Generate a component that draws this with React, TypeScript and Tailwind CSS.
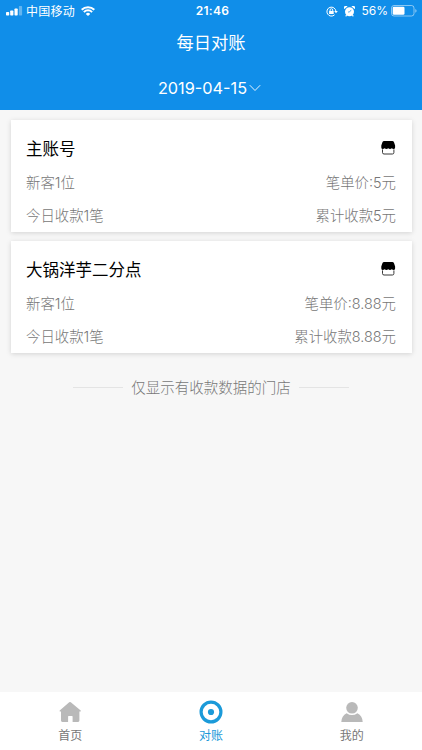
import React from 'react'

interface Store {
  name: string
  newCustomers: string
  unitPrice: string
  count: string
  total: string
}

const stores: Store[] = [
  { name: '主账号', newCustomers: '新客1位', unitPrice: '笔单价:5元', count: '今日收款1笔', total: '累计收款5元' },
  { name: '大锅洋芋二分点', newCustomers: '新客1位', unitPrice: '笔单价:8.88元', count: '今日收款1笔', total: '累计收款8.88元' },
]

function SignalIcon() {
  return (
    <svg width="17" height="10" viewBox="0 0 17 10" fill="currentColor">
      <rect x="0" y="6" width="3.2" height="3.5" rx="0.7" />
      <rect x="4.2" y="4.5" width="3.2" height="5" rx="0.7" />
      <rect x="8.5" y="2.5" width="3.2" height="7" rx="0.7" />
      <rect x="12.9" y="0" width="3.2" height="9.5" rx="0.7" opacity="0.35" />
    </svg>
  )
}

function WifiIcon() {
  return (
    <svg width="14" height="10" viewBox="0 0 14 10" fill="none" stroke="currentColor" strokeWidth="2">
      <path d="M0.7 3.7 A9 9 0 0 1 13.3 3.7" />
      <path d="M2.9 6.1 A5.7 5.7 0 0 1 11.1 6.1" />
      <path d="M4.8 7.9 A3 3 0 0 1 9.2 7.9 L7 10 Z" fill="currentColor" stroke="none" />
    </svg>
  )
}

function LockIcon() {
  return (
    <svg width="12" height="11" viewBox="0 0 12 11" fill="none" stroke="currentColor" strokeWidth="1">
      <path d="M8.6 8.8 A4.5 4.5 0 1 1 9.9 5.2" />
      <path d="M8.2 5 H11.8 L10 7.3 Z" fill="currentColor" stroke="none" />
      <rect x="3.1" y="4.9" width="4.6" height="3.1" fill="currentColor" stroke="none" />
      <path d="M4.1 5 V4 A1.3 1.3 0 0 1 6.7 4 V5" strokeWidth="0.9" />
    </svg>
  )
}

function AlarmIcon() {
  return (
    <svg width="11" height="11" viewBox="0 0 11 11" fill="currentColor">
      <circle cx="5.5" cy="5.7" r="4.5" />
      <path d="M0.3 3.1 A2 2 0 0 1 3.5 0.5 Z" />
      <path d="M10.7 3.1 A2 2 0 0 0 7.5 0.5 Z" />
      <path d="M2.6 9 L1.7 10.4 M8.4 9 L9.3 10.4" stroke="currentColor" strokeWidth="1.1" />
      <path d="M7.2 3.9 L5.5 6 H4" fill="none" stroke="#108ee9" strokeWidth="0.7" />
    </svg>
  )
}

function BatteryIcon() {
  return (
    <svg width="26" height="12" viewBox="0 0 26 12">
      <rect x="0.5" y="0.5" width="22.5" height="10.5" rx="2.5" fill="none" stroke="#fff" strokeOpacity="0.5" />
      <rect x="1.7" y="1.7" width="11.8" height="8.1" rx="1.3" fill="#fff" />
      <path d="M24.3 4 A2 2 0 0 1 24.3 7.7 Z" fill="#fff" fillOpacity="0.55" />
    </svg>
  )
}

function ShopIcon() {
  return (
    <svg width="15" height="14" viewBox="0 0 15 14">
      <path d="M3.2 0 H11.2 Q12.6 0 13.1 1.4 L14.1 4.4 V6.4 Q14 7.9 12.6 8 Q11.6 8 10.8 7.3 Q9.9 8 9 8 Q8 8 7.2 7.3 Q6.4 8 5.4 8 Q4.5 8 3.6 7.3 Q2.8 8 1.8 8 Q0.4 7.9 0.3 6.4 V4.4 L1.3 1.4 Q1.8 0 3.2 0 Z" fill="#000" />
      <path d="M1.5 8.4 V11.5 Q1.5 13 3 13 H11.4 Q12.9 13 12.9 11.5 V8.4" fill="none" stroke="#222" strokeWidth="0.9" />
    </svg>
  )
}

function HomeIcon() {
  return (
    <svg width="24" height="24" viewBox="0 0 24 24" fill="#b9b9b9">
      <path d="M11.2 2.3 Q12 1.7 12.8 2.3 L22.7 10.4 Q23.4 11.4 22.2 11.6 H21.4 V20.6 Q21.4 21.9 20.1 21.9 H14.6 V16.6 Q14.6 15.9 14 15.9 H10.7 Q10.1 15.9 10.1 16.6 V21.9 H4.3 Q3 21.9 3 20.6 V11.6 H2.2 Q1 11.4 1.7 10.4 Z" />
    </svg>
  )
}

function TargetIcon() {
  return (
    <svg width="24" height="24" viewBox="0 0 24 24">
      <circle cx="12" cy="12" r="9.9" fill="none" stroke="#1b9ad9" strokeWidth="3.2" />
      <circle cx="12" cy="12" r="3.1" fill="#1b9ad9" />
    </svg>
  )
}

function UserIcon() {
  return (
    <svg width="24" height="24" viewBox="0 0 24 24" fill="#b9b9b9">
      <circle cx="12" cy="7.8" r="5.8" />
      <path d="M1.3 22 Q1.5 15.8 6.6 13.2 Q12 17 17.4 13.2 Q22.5 15.8 22.7 22 Z" />
    </svg>
  )
}

function StatusBar() {
  return (
    <div className="grid grid-cols-[1fr_auto_1fr] items-center h-[22px] pl-[6px] pr-[5px] text-[12px]">
      <div className="flex items-center">
        <SignalIcon />
        <span className="ml-[3px] pt-px tracking-[0.25px]">中国移动</span>
        <span className="ml-[6px]"><WifiIcon /></span>
      </div>
      <span className="pl-[2px] font-semibold tracking-[0.3px]">21:46</span>
      <div className="flex items-center justify-end">
        <LockIcon />
        <span className="ml-[6px]"><AlarmIcon /></span>
        <span className="ml-[6px] mr-[3px]">56%</span>
        <BatteryIcon />
      </div>
    </div>
  )
}

function StoreCard({ store }: { store: Store }) {
  return (
    <div className="h-[111.5px] px-[15.5px] pt-[15px] bg-white shadow-[0_1px_5px_rgba(0,0,0,0.15)] text-[14.4px] font-light text-[#777]">
      <div className="flex items-center justify-between h-[28px] mb-[4px]">
        <span className="text-[16.5px] font-normal text-black">{store.name}</span>
        <span className="-mt-[2px]"><ShopIcon /></span>
      </div>
      <div className="flex items-center justify-between h-[32.5px]">
        <span>{store.newCustomers}</span>
        <span>{store.unitPrice}</span>
      </div>
      <div className="flex items-center justify-between h-[32.5px]">
        <span>{store.count}</span>
        <span>{store.total}</span>
      </div>
    </div>
  )
}

const tabs = [
  { label: '首页', icon: <HomeIcon />, active: false },
  { label: '对账', icon: <TargetIcon />, active: true },
  { label: '我的', icon: <UserIcon />, active: false },
]

export default function App() {
  return (
    <div className="flex flex-col w-[422px] h-[750px] overflow-hidden bg-[#f7f7f7] font-['Inter','Noto_Sans_CJK_SC',sans-serif] leading-none [&_svg]:block [&_span]:whitespace-nowrap">
      <header className="h-[110px] shrink-0 bg-[#108ee9] text-white">
        <StatusBar />
        <h1 className="flex items-center justify-center h-[42px] text-[17.3px] font-normal">每日对账</h1>
        <div className="flex items-center justify-center h-[48px] pr-[3px]">
          <span className="text-[16.3px]">2019-04-15</span>
          <svg className="ml-[2px]" width="12" height="8" viewBox="0 0 12 8" fill="none" stroke="currentColor" strokeWidth="0.9">
            <path d="M0.8 1.2 L6 6.5 L11.2 1.2" />
          </svg>
        </div>
      </header>

      <main className="flex-1 px-[10.5px] pt-[10px]">
        <div className="flex flex-col gap-[9.5px]">
          {stores.map((store) => (
            <StoreCard key={store.name} store={store} />
          ))}
        </div>
        <div className="flex items-center justify-center gap-[8px] mt-[24px] h-[22px] text-[14.5px] font-light text-[#777]">
          <i className="w-[50px] h-px bg-[#e4e4e4]" />
          <span className="pt-[2px]">仅显示有收款数据的门店</span>
          <i className="w-[50px] h-px bg-[#e4e4e4]" />
        </div>
      </main>

      <nav className="grid grid-cols-3 h-[58px] shrink-0 bg-white">
        {tabs.map((tab) => (
          <div
            key={tab.label}
            className={`flex flex-col items-center pt-[8px] text-[12px] ${tab.active ? 'text-[#1b9ad9]' : 'text-[#777]'}`}
          >
            {tab.icon}
            <span className="mt-[6px]">{tab.label}</span>
          </div>
        ))}
      </nav>
    </div>
  )
}
